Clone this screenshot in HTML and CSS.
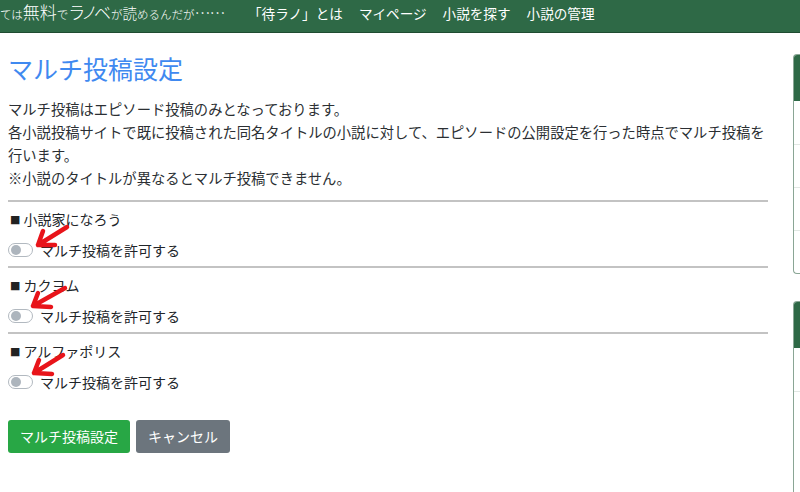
FILE: index.html
```html
<!DOCTYPE html>
<html lang="ja">
<head>
<meta charset="utf-8">
<title>マルチ投稿設定</title>
<link rel="stylesheet" href="styles.css">
</head>
<body>
<header class="navbar">
  <div class="brand"><span class="b-s">ては</span><span class="b-l">無料</span><span class="b-s">で</span><span class="b-xl">ラノベ</span><span class="b-s">が</span><span class="b-m">読</span><span class="b-s">めるんだが</span><span class="b-dots">……</span></div>
  <nav class="nav-links">
    <a class="nav-link">「待ラノ」とは</a>
    <a class="nav-link">マイページ</a>
    <a class="nav-link">小説を探す</a>
    <a class="nav-link">小説の管理</a>
  </nav>
</header>
<div class="layout">
  <main class="main">
    <h1 class="title">マルチ投稿設定</h1>
    <p class="intro">マルチ投稿はエピソード投稿のみとなっております。<br>各小説投稿サイトで既に投稿された同名タイトルの小説に対して、エピソードの公開設定を行った時点でマルチ投稿を行います。<br>※小説のタイトルが異なるとマルチ投稿できません。</p>
    <section class="site">
      <div class="site-name"><span class="mark">■</span>小説家になろう</div>
      <label class="switch-row"><span class="switch"><span class="knob"></span></span>マルチ投稿を許可する</label>
    </section>
    <section class="site">
      <div class="site-name"><span class="mark">■</span>カクヨム</div>
      <label class="switch-row"><span class="switch"><span class="knob"></span></span>マルチ投稿を許可する</label>
    </section>
    <section class="site">
      <div class="site-name"><span class="mark">■</span>アルファポリス</div>
      <label class="switch-row"><span class="switch"><span class="knob"></span></span>マルチ投稿を許可する</label>
    </section>
    <div class="actions">
      <button class="btn btn-green">マルチ投稿設定</button>
      <button class="btn btn-gray">キャンセル</button>
    </div>
  </main>
  <aside class="sidebar">
    <div class="card card-first">
      <div class="card-head"></div>
      <div class="card-item"></div>
      <div class="card-item"></div>
      <div class="card-item"></div>
      <div class="card-item"></div>
    </div>
    <div class="card card-second">
      <div class="card-head"></div>
      <div class="card-item"></div>
      <div class="card-item"></div>
    </div>
  </aside>
</div>
<svg class="annot" width="800" height="492" viewBox="0 0 800 492" aria-hidden="true">
  <g fill="none" stroke="#e8141a" stroke-width="4.5" stroke-linecap="round" stroke-linejoin="round">
    <path d="M67 227 L38 245 M43 231 L38 245 L55 245"/>
    <path d="M65 288 L33 306 M38 293 L33 306 L51 307"/>
    <path d="M63 355 L34 373 M39 360 L34 373 L52 374"/>
  </g>
</svg>
</body>
</html>
```

FILE: styles.css
```css
* { box-sizing: border-box; }
html, body { margin: 0; padding: 0; }
body {
  width: 800px;
  height: 492px;
  overflow: hidden;
  position: relative;
  background: #fff;
  color: #212529;
  font-family: "Noto Sans CJK JP", "Noto Sans", sans-serif;
}

.navbar {
  height: 33px;
  background: #2e6946;
  border-bottom: 1px solid #1f4c31;
  display: flex;
  align-items: flex-start;
  color: #fff;
  padding-top: 1px;
}
.brand {
  width: 248px;
  flex: none;
  white-space: nowrap;
  line-height: 22px;
  display: flex;
  align-items: baseline;
  font-weight: 300;
}
.b-s { font-size: 11.5px; }
.b-l { font-size: 17px; }
.b-xl { font-size: 17px; letter-spacing: -4px; margin-right: 4px; }
.b-m { font-size: 14.5px; }
.b-dots { font-size: 16px; letter-spacing: -1px; }

.nav-links {
  display: flex;
  gap: 16px;
  font-size: 13.6px;
  line-height: 22px;
  padding-top: 1px;
}
.nav-link { color: #fff; text-decoration: none; white-space: nowrap; }

.layout { display: flex; align-items: flex-start; }
.main {
  flex: none;
  width: 768px;
  padding-left: 8px;
}
.title {
  margin: 20px 0 0;
  font-size: 25px;
  line-height: 30px;
  font-weight: 400;
  color: #3f89f0;
}
.intro {
  margin: 14px 0 11px;
  font-size: 14.3px;
  line-height: 23px;
  color: #2b2f33;
}
.site {
  border-top: 2px solid #c3c3c3;
  padding: 6px 0 5px;
}
.site-name {
  font-size: 14px;
  line-height: 23px;
  height: 23px;
  display: flex;
  align-items: center;
}
.mark {
  font-family: "DejaVu Sans", sans-serif;
  font-size: 11px;
  margin: 0 3px 0 2px;
  color: #222;
}
.switch-row {
  margin-top: 7px;
  height: 23px;
  display: flex;
  align-items: center;
  gap: 7px;
  font-size: 14px;
}
.switch {
  width: 25px;
  height: 14px;
  border: 1px solid #b2b9c0;
  border-radius: 7px;
  background: #fff;
  display: flex;
  align-items: center;
  padding-left: 2px;
  flex: none;
}
.knob {
  width: 10px;
  height: 10px;
  border-radius: 50%;
  background: #adb5bd;
}

.actions {
  margin-top: 22px;
  display: flex;
  gap: 6px;
}
.btn {
  height: 33px;
  padding: 0 12px;
  border: none;
  border-radius: 3px;
  color: #fff;
  font-family: inherit;
  font-size: 14px;
  line-height: 33px;
}
.btn-green { background: #28a745; }
.btn-gray { background: #6c757d; }

.sidebar {
  flex: none;
  width: 7px;
  margin-left: 25px;
  padding-top: 21px;
}
.card {
  border: 1px solid #8aa695;
  border-right: none;
  border-radius: 4px 0 0 4px;
  overflow: hidden;
}
.card-head { height: 46px; background: #2e6946; }
.card-item { height: 43px; border-top: 1px solid #e2e8e4; }
.card-head + .card-item { border-top: none; }
.card-second { margin-top: 27px; height: 200px; }

.annot {
  position: absolute;
  left: 0;
  top: 0;
  pointer-events: none;
}
```
